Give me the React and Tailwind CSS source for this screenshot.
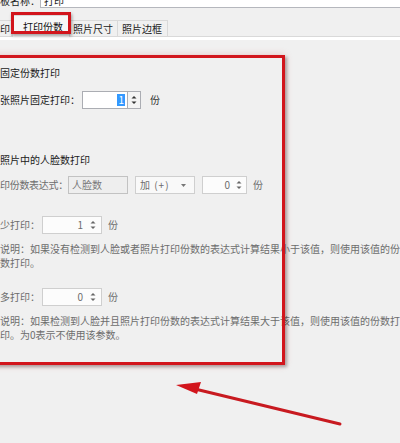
const Spin = ({ color = "#555" }) => (
  <svg width="6" height="10" viewBox="0 0 6 10" className="shrink-0">
    <path d="M0.5 3.5 L3 1 L5.5 3.5 Z" fill={color} />
    <path d="M0.5 6.5 L3 9 L5.5 6.5 Z" fill={color} />
  </svg>
);

export default function App() {
  return (
    <div className="relative w-[400px] h-[443px] overflow-hidden bg-[#f0f0f0] text-[10px] text-[#1e1e1e] font-['Noto_Sans_CJK_SC','Noto_Sans',sans-serif]">
      {/* top row */}
      <div className="flex h-[14px] -mt-[6px] items-stretch">
        <div className="w-[40px] flex justify-end items-center overflow-hidden whitespace-nowrap leading-[14px] text-[#222]">
          模板名称：
        </div>
        <div className="flex-1 bg-white border-b border-l border-[#b5b7bd] pl-[3px] leading-[14px] text-[#222]">
          打印
        </div>
      </div>

      {/* tabs */}
      <div className="mt-[5px] flex h-[24px] items-end border-b border-[#d9d9d9]">
        <div className="h-[16px] w-[12px] overflow-hidden whitespace-nowrap border-r border-t border-[#d9d9d9] bg-[#f0f0f0] leading-[15px] text-[#222]">
          印
        </div>
        <div className="-mb-px h-[22px] w-[58px] border-x border-t border-[#d9d9d9] bg-[#f7f7f7] pl-[10px] pt-[4px] leading-[14px] text-[#111]">
          打印份数
        </div>
        <div className="h-[16px] w-[48px] border-r border-t border-[#d9d9d9] bg-[#f0f0f0] pl-[3px] leading-[16px] text-[#222]">
          照片尺寸
        </div>
        <div className="h-[16px] w-[50px] border-r border-t border-[#d9d9d9] bg-[#f0f0f0] pl-[4px] leading-[16px] text-[#222]">
          照片边框
        </div>
      </div>
      <div className="h-[3px] bg-white" />

      {/* content */}
      <div className="flex flex-col pt-[26px] whitespace-nowrap">
        <div className="h-[14px] leading-[14px] text-[#1a1a1a]">固定份数打印</div>

        <div className="mt-[11px] flex h-[18px] items-center">
          <div className="w-[82px] leading-[14px] text-[#1a1a1a]">张照片固定打印：</div>
          <div className="flex h-[18px] w-[46px] items-center justify-end border border-[#abadb3] bg-white pr-[2px]">
            <span className="bg-[#3399ff] px-[1px] leading-[12px] text-white">1</span>
          </div>
          <div className="flex h-[18px] w-[13px] items-center justify-center border border-l-0 border-[#abadb3] bg-[#f4f4f4]">
            <Spin color="#333" />
          </div>
          <div className="ml-[9px] leading-[14px] text-[#333]">份</div>
        </div>

        <div className="mt-[44px] h-[14px] leading-[14px] text-[#1a1a1a]">照片中的人脸数打印</div>

        <div className="mt-[9px] flex h-[18px] items-center text-[#6d6d6d]">
          <div className="w-[68px] shrink-0 leading-[14px] tracking-[-0.3px]">印份数表达式：</div>
          <div className="flex h-[18px] w-[60px] items-center border border-[#c2c2c2] bg-[#eeeeee] pl-[3px] leading-[14px] text-[#7a7a7a]">
            人脸数
          </div>
          <div className="ml-[7px] flex h-[18px] w-[60px] items-center justify-between border border-[#cfcfcf] bg-[#f9f9f9] pl-[4px] pr-[8px] leading-[14px] text-[#6d6d6d]">
            <span className="tracking-[1px]">加 (+)</span>
            <svg width="5" height="3" viewBox="0 0 5 3"><path d="M0 0 L5 0 L2.5 3 Z" fill="#777" /></svg>
          </div>
          <div className="ml-[7px] flex h-[18px] w-[45px] items-center justify-end gap-[6px] border border-[#cfcfcf] bg-[#fcfcfc] pr-[4px] leading-[14px]">
            <span>0</span>
            <Spin color="#666" />
          </div>
          <div className="ml-[6px] leading-[14px]">份</div>
        </div>

        <div className="mt-[22px] flex h-[18px] items-center text-[#6d6d6d]">
          <div className="w-[42px] leading-[14px]">少打印：</div>
          <div className="flex h-[18px] w-[60px] items-center justify-end gap-[7px] border border-[#cfcfcf] bg-[#fcfcfc] pr-[5px] leading-[14px]">
            <span>1</span>
            <Spin color="#666" />
          </div>
          <div className="ml-[6px] leading-[14px]">份</div>
        </div>

        <div className="mt-[8px] flex flex-col leading-[14px] text-[#6d6d6d]">
          <div>说明：如果没有检测到人脸或者照片打印份数的表达式计算结果小于该值，则使用该值的份</div>
          <div>数打印。</div>
        </div>

        <div className="mt-[18px] flex h-[18px] items-center text-[#6d6d6d]">
          <div className="w-[42px] leading-[14px]">多打印：</div>
          <div className="flex h-[18px] w-[60px] items-center justify-end gap-[7px] border border-[#cfcfcf] bg-[#fcfcfc] pr-[5px] leading-[14px]">
            <span>0</span>
            <Spin color="#666" />
          </div>
          <div className="ml-[6px] leading-[14px]">份</div>
        </div>

        <div className="mt-[8px] flex flex-col leading-[14px] text-[#6d6d6d]">
          <div>说明：如果检测到人脸并且照片打印份数的表达式计算结果大于该值，则使用该值的份数打</div>
          <div>印。为0表示不使用该参数。</div>
        </div>
      </div>

      {/* annotations */}
      <div className="pointer-events-none absolute left-[11px] top-[12px] h-[22px] w-[60px] border-[3px] border-[#d2151c] shadow-[1px_2px_3px_rgba(0,0,0,0.35)]" />
      <div className="pointer-events-none absolute -left-[10px] top-[55px] h-[310px] w-[295px] border-[3px] border-[#d2151c] shadow-[0_0_8px_rgba(210,40,40,0.2),2px_2px_3px_rgba(0,0,0,0.3)]" />
      <svg className="pointer-events-none absolute left-0 top-0" width="400" height="443" viewBox="0 0 400 443">
        <line x1="340" y1="424" x2="195" y2="389" stroke="#c81a20" strokeWidth="3" strokeLinecap="round" />
        <path d="M176 385 L201 382 L197 394 Z" fill="#d2151c" />
      </svg>
    </div>
  );
}
